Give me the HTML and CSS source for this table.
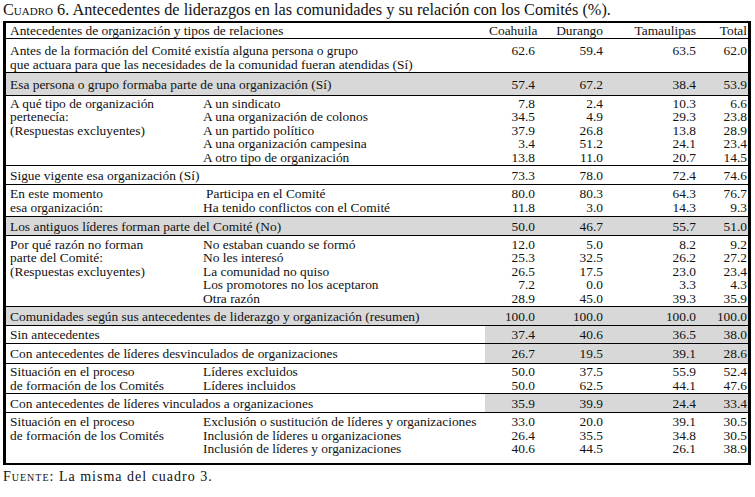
FILE: index.html
```html
<!DOCTYPE html>
<html lang="es">
<head>
<meta charset="utf-8">
<title>Cuadro 6</title>
<link rel="stylesheet" href="styles.css">
</head>
<body>
<p class="title"><span class="sc">Cuadro</span> 6. Antecedentes de liderazgos en las comunidades y su relación con los Comités (%).</p>
<div class="frame">
<table class="data">
<colgroup>
<col class="c1"><col class="c2"><col class="c3"><col class="c4"><col class="c5"><col class="c6">
</colgroup>
<tr class="head">
<td colspan="2">Antecedentes de organización y tipos de relaciones</td>
<td class="n">Coahuila</td><td class="n">Durango</td><td class="n">Tamaulipas</td><td class="n t">Total</td>
</tr>
<tr class="r-antes">
<td colspan="2">Antes de la formación del Comité existía alguna persona o grupo<br>que actuara para que las necesidades de la comunidad fueran atendidas (Sí)</td>
<td class="n">62.6</td><td class="n">59.4</td><td class="n">63.5</td><td class="n t">62.0</td>
</tr>
<tr class="gray r-esa">
<td colspan="2">Esa persona o grupo formaba parte de una organización (Sí)</td>
<td class="n">57.4</td><td class="n">67.2</td><td class="n">38.4</td><td class="n t">53.9</td>
</tr>
<tr class="r-five">
<td>A qué tipo de organización<br>pertenecía:<br>(Respuestas excluyentes)</td>
<td class="sub">A un sindicato<br>A una organización de colonos<br>A un partido político<br>A una organización campesina<br>A otro tipo de organización</td>
<td class="n">7.8<br>34.5<br>37.9<br>3.4<br>13.8</td>
<td class="n">2.4<br>4.9<br>26.8<br>51.2<br>11.0</td>
<td class="n">10.3<br>29.3<br>13.8<br>24.1<br>20.7</td>
<td class="n t">6.6<br>23.8<br>28.9<br>23.4<br>14.5</td>
</tr>
<tr class="r-one">
<td colspan="2">Sigue vigente esa organización (Sí)</td>
<td class="n">73.3</td><td class="n">78.0</td><td class="n">72.4</td><td class="n t">74.6</td>
</tr>
<tr class="r-two">
<td>En este momento<br>esa organización:</td>
<td class="sub sub-r">Participa en el Comité<br><span class="pull">Ha tenido conflictos con el Comité</span></td>
<td class="n">80.0<br>11.8</td><td class="n">80.3<br>3.0</td><td class="n">64.3<br>14.3</td><td class="n t">76.7<br>9.3</td>
</tr>
<tr class="gray r-one">
<td colspan="2">Los antiguos líderes forman parte del Comité (No)</td>
<td class="n">50.0</td><td class="n">46.7</td><td class="n">55.7</td><td class="n t">51.0</td>
</tr>
<tr class="r-five2">
<td>Por qué razón no forman<br>parte del Comité:<br>(Respuestas excluyentes)</td>
<td class="sub">No estaban cuando se formó<br>No les interesó<br>La comunidad no quiso<br>Los promotores no los aceptaron<br>Otra razón</td>
<td class="n">12.0<br>25.3<br>26.5<br>7.2<br>28.9</td>
<td class="n">5.0<br>32.5<br>17.5<br>0.0<br>45.0</td>
<td class="n">8.2<br>26.2<br>23.0<br>3.3<br>39.3</td>
<td class="n t">9.2<br>27.2<br>23.4<br>4.3<br>35.9</td>
</tr>
<tr class="gray r-one">
<td colspan="2">Comunidades según sus antecedentes de liderazgo y organización (resumen)</td>
<td class="n">100.0</td><td class="n">100.0</td><td class="n">100.0</td><td class="n t">100.0</td>
</tr>
<tr class="graynum r-sin">
<td colspan="2">Sin antecedentes</td>
<td class="n">37.4</td><td class="n">40.6</td><td class="n">36.5</td><td class="n t">38.0</td>
</tr>
<tr class="graynum r-desv">
<td colspan="2">Con antecedentes de líderes desvinculados de organizaciones</td>
<td class="n">26.7</td><td class="n">19.5</td><td class="n">39.1</td><td class="n t">28.6</td>
</tr>
<tr class="r-sit">
<td>Situación en el proceso<br>de formación de los Comités</td>
<td class="sub">Líderes excluidos<br>Líderes incluidos</td>
<td class="n">50.0<br>50.0</td><td class="n">37.5<br>62.5</td><td class="n">55.9<br>44.1</td><td class="n t">52.4<br>47.6</td>
</tr>
<tr class="graynum r-one">
<td colspan="2">Con antecedentes de líderes vinculados a organizaciones</td>
<td class="n">35.9</td><td class="n">39.9</td><td class="n">24.4</td><td class="n t">33.4</td>
</tr>
<tr class="r-last">
<td>Situación en el proceso<br>de formación de los Comités</td>
<td class="sub">Exclusión o sustitución de líderes y organizaciones<br>Inclusión de líderes u organizaciones<br>Inclusión de líderes y organizaciones</td>
<td class="n">33.0<br>26.4<br>40.6</td><td class="n">20.0<br>35.5<br>44.5</td><td class="n">39.1<br>34.8<br>26.1</td><td class="n t">30.5<br>30.5<br>38.9</td>
</tr>
</table>
</div>
<p class="source"><span class="sc">Fuente</span>: La misma del cuadro 3.</p>
</body>
</html>
```

FILE: styles.css
```css
html, body {
  margin: 0;
  padding: 0;
  background: #ffffff;
  color: #111111;
  font-family: "Liberation Serif", "Times New Roman", serif;
}
body {
  padding: 2px 0 0 3px;
}
.title {
  margin: 0 0 3px 0;
  font-size: 16.3px;
  line-height: 16px;
  white-space: nowrap;
}
.sc {
  font-variant: small-caps;
}
.frame {
  width: 742px;
  border-left: 3px solid #000;
  border-right: 3px solid #000;
  border-top: 2px solid #000;
  border-bottom: 2px solid #000;
}
.data {
  width: 742px;
  table-layout: fixed;
  border-collapse: collapse;
  font-size: 13.4px;
  line-height: 13.5px;
}
.c1 { width: 192px; }
.c2 { width: 287px; }
.c3 { width: 54px; }
.c4 { width: 68px; }
.c5 { width: 93px; }
.c6 { width: 48px; }
.data td {
  padding: 2.5px 4px 2px 4px;
  vertical-align: top;
  white-space: nowrap;
}
.data tr + tr td {
  border-top: 1px solid #000;
}
.data td.sub {
  padding-left: 5px;
}
.data td.sub-r {
  padding-left: 8px;
}
.pull {
  margin-left: -3px;
}
.data td.n {
  text-align: right;
}
.data td.t {
  padding-right: 1px;
}
.head td { padding-top: 1px; padding-bottom: 0.5px; }
.r-antes td { padding-top: 5px; padding-bottom: 1px; }
.r-esa td { padding-top: 4.5px; padding-bottom: 4px; }
.r-five td { padding-top: 0.5px; padding-bottom: 1px; }
.r-one td { padding-top: 2.5px; padding-bottom: 2px; }
.r-two td { padding-top: 2px; padding-bottom: 2px; }
.r-five2 td { padding-top: 1.5px; padding-bottom: 1px; }
.r-sin td { padding-top: 2px; padding-bottom: 1.5px; }
.r-desv td { padding-top: 3px; padding-bottom: 2.5px; }
.r-sit td { padding-top: 1px; padding-bottom: 1px; }
.r-last td { padding-top: 2px; padding-bottom: 7.5px; }
.gray td {
  background: #d8d8d8;
}
.graynum td.n {
  background: #d8d8d8;
}
.source {
  margin: 4px 0 0 0;
  font-size: 14px;
  line-height: 15px;
  letter-spacing: 1px;
}
```
